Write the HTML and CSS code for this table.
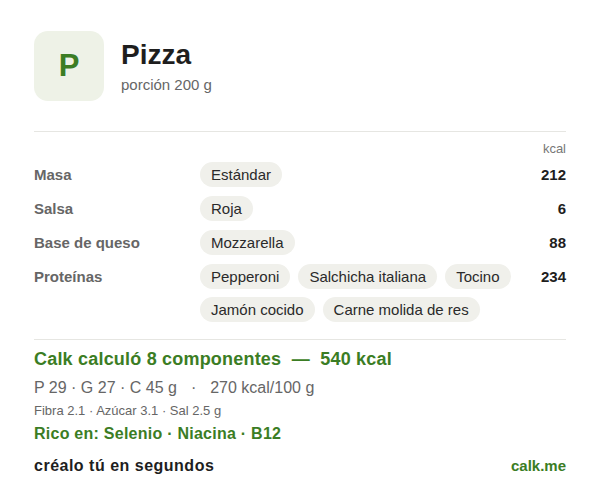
FILE: index.html
```html
<!DOCTYPE html>
<html>
<head>
    <meta name="viewport" content="width=device-width, initial-scale=1.0">
    <title>Pizza</title>
    <link rel="stylesheet" href="styles.css">
</head>
<body>
    <div class="card">
        <div class="head">
            <div class="logo">P</div>
            <div>
                <h1>Pizza</h1>
                <p class="portion">porción 200 g</p>
            </div>
        </div>

        <div class="table">
            <div class="unit">kcal</div>
            <div class="row">
                <span class="label">Masa</span>
                <div class="chips"><span class="chip">Estándar</span></div>
                <span class="kcal">212</span>
            </div>
            <div class="row">
                <span class="label">Salsa</span>
                <div class="chips"><span class="chip">Roja</span></div>
                <span class="kcal">6</span>
            </div>
            <div class="row">
                <span class="label">Base de queso</span>
                <div class="chips"><span class="chip">Mozzarella</span></div>
                <span class="kcal">88</span>
            </div>
            <div class="row">
                <span class="label">Proteínas</span>
                <div class="chips">
                    <span class="chip">Pepperoni</span>
                    <span class="chip">Salchicha italiana</span>
                    <span class="chip">Tocino</span>
                    <span class="chip">Jamón cocido</span>
                    <span class="chip">Carne molida de res</span>
                </div>
                <span class="kcal">234</span>
            </div>
        </div>

        <div class="summary">
            <p class="total">Calk calculó 8 componentes &nbsp;— &nbsp;540 kcal</p>
            <p class="macros">P 29 · G 27 · C 45 g<span class="sep">·</span>270 kcal/100 g</p>
            <p class="extra">Fibra 2.1 · Azúcar 3.1 · Sal 2.5 g</p>
            <p class="rich">Rico en: Selenio · Niacina · B12</p>
        </div>

        <div class="foot">
            <span class="cta">créalo tú en segundos</span>
            <span class="brand">calk.me</span>
        </div>
    </div>
</body>
</html>
```

FILE: styles.css
```css
body { margin: 0; background: #fff; font-family: "Liberation Sans", Arial, sans-serif; color: #222; }
p { margin: 0; }
.card { padding: 31px 34px 0 34px; }

.head { display: flex; align-items: center; gap: 17px; padding-bottom: 30px; border-bottom: 1px solid #e6e6e2; }
.logo { width: 70px; height: 70px; border-radius: 14px; background: #eef2e7; color: #3b7d24; font-size: 31px; font-weight: 700; display: flex; align-items: center; justify-content: center; }
h1 { margin: 0 0 5px; font-size: 28px; font-weight: 700; color: #1e1e1e; }
.portion { font-size: 15px; color: #666; }

.table { padding: 9px 0 8px; border-bottom: 1px solid #e6e6e2; }
.unit { text-align: right; font-size: 13px; line-height: 15px; color: #777; margin-bottom: 6px; }
.row { display: grid; grid-template-columns: 166px 1fr auto; align-items: start; margin-bottom: 9px; }
.label { font-size: 15px; font-weight: 700; color: #666; line-height: 25px; }
.chips { display: flex; flex-wrap: wrap; gap: 8px; }
.chip { background: #f0f0eb; border-radius: 13px; padding: 0 11px; font-size: 15px; line-height: 25px; color: #2a2a2a; }
.kcal { font-size: 15px; font-weight: 700; line-height: 25px; color: #1e1e1e; }

.summary { padding-top: 8px; }
.total { font-size: 18px; font-weight: 700; color: #3b7d24; line-height: 22px; letter-spacing: 0.2px; }
.macros { font-size: 16px; line-height: 18px; color: #666; margin-top: 9px; }
.macros .sep { margin: 0 14px; }
.extra { font-size: 13px; line-height: 15px; color: #666; margin-top: 6px; }
.rich { font-size: 16px; line-height: 18px; font-weight: 700; color: #3b7d24; margin-top: 7px; letter-spacing: 0.25px; }

.foot { display: flex; justify-content: space-between; align-items: baseline; margin-top: 14px; font-size: 16px; line-height: 18px; font-weight: 700; }
.cta { color: #1e1e1e; letter-spacing: 0.5px; }
.brand { color: #3b7d24; font-size: 15px; }
```
